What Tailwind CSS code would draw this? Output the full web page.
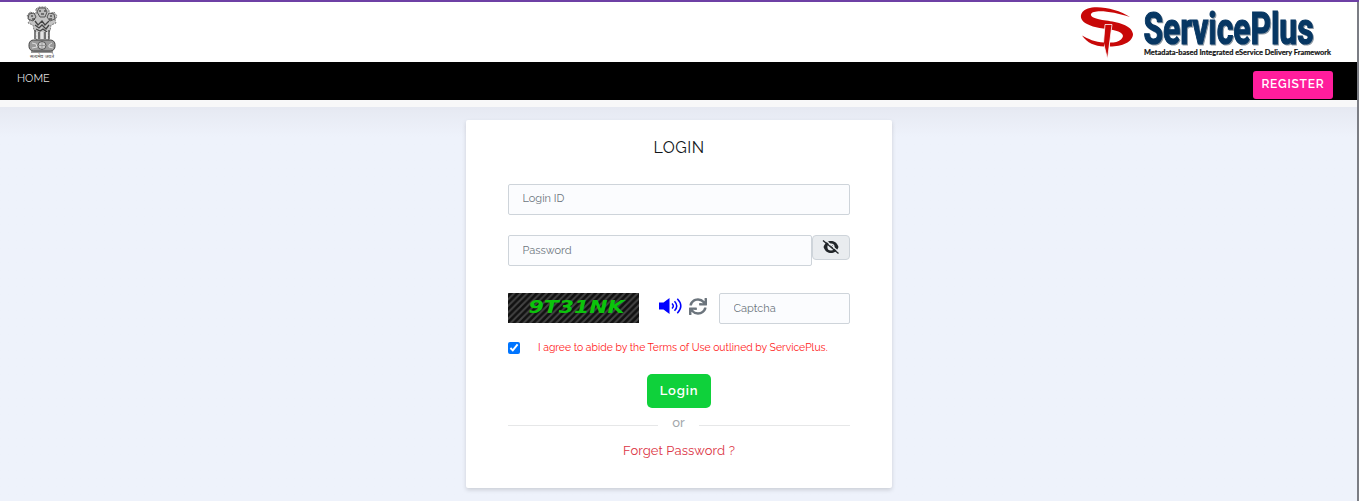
<!DOCTYPE html>
<html lang="en">
  <head>
    <meta charset="utf-8" />
    <meta content="width=device-width, initial-scale=1.0" name="viewport" />
    <title>ServicePlus - Login</title>
    <script src="https://cdn.jsdelivr.net/npm/@tailwindcss/browser@4"></script>
  </head>
  <body class="h-[501px] overflow-hidden border-t-2 border-[#6e40a5] bg-[#eef2fb] font-['Raleway','Lato',sans-serif]">
    <div class="flex h-[499px] flex-col border-r-2 border-[#7b7d84]">
      <!-- Logos -->
      <header class="flex h-[60px] shrink-0 items-start justify-between bg-white pr-[25px] pl-[25px]">
        <svg class="mt-1 h-[54px] w-[34px] overflow-visible" viewBox="0 0 34 54" fill="none" stroke="#444" stroke-width="1">
          <path d="M11 3l3-2h7l3 3v4l5-2 3 4-2 4 1 3-5 2-1 6-2 2 1 9H11l1-9-3-3-1-5-5-2 2-3-3-4 3-4 6 2V4z" fill="#c4c4c4" stroke="#777" stroke-dasharray="2 1" />
          <path d="M14 2h6l2 4-2 5h-5l-3-5zM4 8l5-1 2 4-3 4-5-2zm25 0-5-1-2 4 3 4 5-2z" fill="#bbb" stroke="#555" />
          <path d="M14 5h2m3 0h2m-5 3h3M6 10h2m17 0h2M7 13h3m14 0h3" stroke="#222" />
          <path d="M10 15l3 4 4-4 3 4 4-4M10 19l4 3 3-3 4 4 3-4M11 23l4 2 3-2 4 3" stroke="#444" stroke-width="1.300" />
          <path d="M10 24v9M14 26v7M20 26v7M24 24v9" stroke="#555" stroke-width="1.500" />
          <path d="M12 26v7M17 26v7M22 26v7" stroke="#eee" stroke-width="1.500" />
          <rect x="4" y="34" width="26" height="11" rx="4.500" fill="#999" stroke="#444" />
          <circle cx="17" cy="39.500" r="4" fill="#ccc" stroke="#555" />
          <path d="M17 36v7m-3.500-3.500h7" stroke="#777" stroke-width=".6" />
          <path d="M7 37l4 1 1 3-5 1m20-5-3 2v2l4 1" stroke="#ddd" />
          <path d="M6 46h22" stroke="#333" />
          <text x="17" y="52" text-anchor="middle" fill="#444" stroke="none" font-family="Noto Sans, sans-serif" font-size="4.500" textLength="24" lengthAdjust="spacingAndGlyphs">सत्यमेव जयते</text>
        </svg>
        <svg class="h-[60px] w-[254px] overflow-visible" viewBox="1078 2 254 60">
          <path d="M1130 17C1120 10 1103 6 1092 7.500C1080 9 1077 19 1087 24C1094 28 1105 28.500 1113 30C1121 31.500 1126 35 1121 39.500C1118 42 1115 42.500 1110 42.500L1110 46.500C1122 46.500 1133 42 1133 34C1132 25 1117 22 1106 20.500C1095 19 1090 17 1091 14C1093 9 1113 11 1130 17Z" fill="#c80808" />
          <path d="M1105 24.500L1112 24.500L1107.500 59L1103.500 43Z" fill="#c80808" stroke="#fff" stroke-width=".8" />
          <path d="M1082 35.500C1087 43 1095 46 1104 46.500L1104 42.500C1095 42 1088 39 1082 35.500Z" fill="#c80808" />
          <text class="drop-shadow-[1px_1px_0_#8c98a3]" x="1143.500" y="43.500" fill="#073763" stroke="#073763" stroke-width="1.200" font-family="Roboto, sans-serif" font-size="45" font-weight="700" textLength="170" lengthAdjust="spacingAndGlyphs">ServicePlus</text>
          <text x="1144" y="54.500" fill="#111" stroke="#111" stroke-width=".2" font-family="Lato, sans-serif" font-size="7.500" font-weight="700" textLength="187" lengthAdjust="spacingAndGlyphs">Metadata-based Integrated eService Delivery Framework</text>
        </svg>
      </header>

      <!-- Navigation -->
      <nav class="flex h-[38px] shrink-0 items-start justify-between bg-black pr-6 pl-[17px]">
        <a class="pt-[9px] text-[11px] leading-4 text-[#ddd]" href="#">HOME</a>
        <a class="mt-[9px] flex h-7 w-20 justify-center rounded-[3px] bg-[#ff1d9c] pt-[5px] text-[12px] leading-4 font-semibold tracking-[0.8px] text-white" href="#">REGISTER</a>
      </nav>
      <div class="h-[7px] shrink-0 bg-[#f8f8f9]"></div>

      <main class="flex flex-1 justify-center bg-linear-to-b from-[#e6e9f2] to-[#eef2fb] to-[30px] pt-[13px]">
        <form class="flex h-[368px] w-[426px] flex-col rounded-[2px] bg-white px-[42px] shadow-[0_2px_4px_rgba(0,0,0,0.15)]">
          <h1 class="mt-4 pl-px text-center text-[16px] leading-6 tracking-[0.5px] text-[#111519]">LOGIN</h1>

          <input
            class="mt-6 h-[31px] w-full shrink-0 rounded-[2px] border border-[#ced4da] bg-[#fbfcfe] px-[14px] pb-[3px] text-[11px] placeholder:text-[#6c757d]"
            type="text"
            placeholder="Login ID"
          />

          <div class="mt-5 flex h-[31px] shrink-0 items-start">
            <input
              class="h-[31px] w-[304px] rounded-[2px] border border-[#ced4da] bg-[#fbfcfe] px-[14px] text-[11px] placeholder:text-[#6c757d]"
              type="password"
              placeholder="Password"
            />
            <button class="flex h-[25px] w-[38px] justify-center rounded-[4px] border border-[#ced4da] bg-[#e9ecef] pt-[3px]" type="button">
              <svg class="h-4 w-[18px]" viewBox="0 0 18 16">
                <path d="M1.500 8C3 3.500 6 2 9 2S15 3.500 16.500 8C15 12.500 12 14 9 14S3 12.500 1.500 8Z" fill="#212529" />
                <circle cx="9" cy="8" r="3.600" fill="#e9ecef" />
                <path d="M8 6.500l3-.5v3.500z" fill="#212529" />
                <path d="M3 .8L17 13" stroke="#e9ecef" stroke-width="1.200" />
                <path d="M1 1.500L16.500 14.500" stroke="#212529" stroke-width="1.300" />
              </svg>
            </button>
          </div>

          <!-- Captcha -->
          <div class="mt-[27px] flex h-[31px] shrink-0 items-start">
            <svg class="h-[30px] w-[131px]" viewBox="0 0 131 30">
              <defs>
                <pattern id="stripes" width="6.500" height="6.500" patternUnits="userSpaceOnUse">
                  <rect width="6.500" height="6.500" fill="#111" />
                  <path d="M-1 1l2-2M-1 7.500L7.500 -1M5.500 7.500l2-2" stroke="#444" stroke-width="1.900" />
                </pattern>
              </defs>
              <rect width="131" height="30" fill="url(#stripes)" />
              <text x="20.500" y="20" fill="#0bc40b" font-family="DejaVu Sans, sans-serif" font-size="18" font-style="italic" font-weight="700" textLength="96" lengthAdjust="spacingAndGlyphs">9T31NK</text>
            </svg>
            <svg class="mt-[5px] ml-5 h-4 w-[23px]" viewBox="0 0 23 16" fill="none" stroke="#00f" stroke-width="1.500">
              <path d="M0 4.500h4.500L10.500 0v16L4.500 11.500H0z" fill="#00f" stroke="none" />
              <path d="M13 5.500q2.600 2.500 0 5M15.500 3.200q4.500 4.800 0 9.600M18.300 .8q7 7.200 0 14.400" />
            </svg>
            <svg class="mt-[5px] ml-[7px] h-[17px] w-[18px] text-[#6c757d]" viewBox="0 0 512 512" preserveAspectRatio="none" fill="currentColor">
              <path d="M440.650 12.570l4 82.770A247.160 247.160 0 0 0 255.830 8C134.730 8 33.910 94.920 12.290 209.820A12 12 0 0 0 24.090 224h49.050a12 12 0 0 0 11.670-9.260 175.910 175.910 0 0 1 317-56.940l-101.460-4.860a12 12 0 0 0-12.570 12v47.410a12 12 0 0 0 12 12H500a12 12 0 0 0 12-12V12a12 12 0 0 0-12-12h-47.370a12 12 0 0 0-11.980 12.570zM255.830 432a175.610 175.610 0 0 1-146-77.800l101.800 4.870a12 12 0 0 0 12.570-12v-47.400a12 12 0 0 0-12-12H12a12 12 0 0 0-12 12V500a12 12 0 0 0 12 12h47.350a12 12 0 0 0 12-12.600l-4.150-82.570A247.170 247.170 0 0 0 255.830 504c121.110 0 221.930-86.920 243.550-201.820a12 12 0 0 0-11.800-14.180h-49.050a12 12 0 0 0-11.670 9.260A175.860 175.860 0 0 1 255.830 432z" />
            </svg>
            <input
              class="ml-auto h-[31px] w-[131px] rounded-[2px] border border-[#ced4da] bg-[#fbfcfe] px-[14px] text-[11px] placeholder:text-[#6c757d]"
              type="text"
              placeholder="Captcha"
            />
          </div>

          <div class="mt-[15px] flex h-4 shrink-0 items-start">
            <input class="mt-[3px] h-[12px] w-[12px] accent-[#0075ff]" id="agree" type="checkbox" checked />
            <label class="ml-[18.5px] text-[10.4px] leading-4 whitespace-nowrap text-[#ff1818]" for="agree">I agree to abide by the Terms of Use outlined by ServicePlus.</label>
          </div>

          <button class="mt-[19px] flex h-[34px] w-16 shrink-0 justify-center self-center rounded-[5px] bg-[#0fd13b] pt-[9px] pl-px text-[13px] leading-4 font-semibold tracking-[0.8px] text-white" type="button">Login</button>

          <div class="-mr-px mt-[7px] flex h-4 shrink-0 justify-between text-[13px] leading-4 font-medium text-[#a3a8ac]">
            <span class="mt-[10px] h-px w-[150px] bg-[#e6e7e8]"></span>
            <span>or</span>
            <span class="mt-[10px] h-px w-[151px] bg-[#e6e7e8]"></span>
          </div>
          <a class="mt-3 pl-px text-center text-[13px] leading-4 tracking-[0.1px] text-[#dc3545]" href="#">Forget Password ?</a>
        </form>
      </main>
    </div>
  </body>
</html>
